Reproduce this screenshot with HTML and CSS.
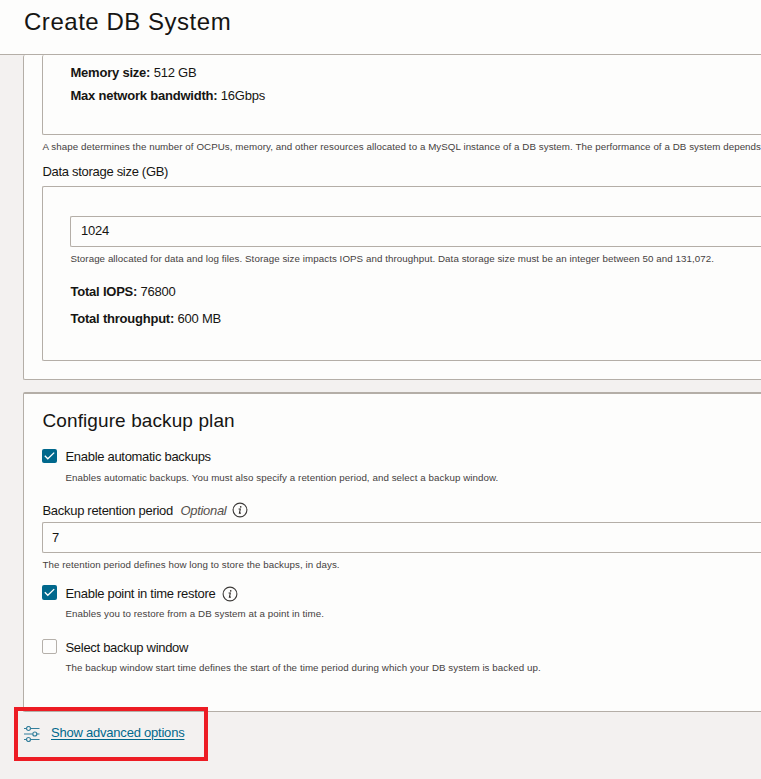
FILE: index.html
```html
<!DOCTYPE html>
<html lang="en">
<head>
<meta charset="utf-8">
<title>Create DB System</title>
<link rel="stylesheet" href="styles.css">
</head>
<body>
<header class="page-header"><h1>Create DB System</h1></header>
<main class="content">
  <section class="card card-hardware">
    <div class="box shape-box">
      <p class="detail"><b>Memory size:</b> 512 GB</p>
      <p class="detail"><b>Max network bandwidth:</b> 16Gbps</p>
    </div>
    <p class="hint shape-hint">A shape determines the number of OCPUs, memory, and other resources allocated to a MySQL instance of a DB system. The performance of a DB system depends</p>
    <p class="label storage-label">Data storage size (GB)</p>
    <div class="box storage-box">
      <div class="field">1024</div>
      <p class="hint storage-hint">Storage allocated for data and log files. Storage size impacts IOPS and throughput. Data storage size must be an integer between 50 and 131,072.</p>
      <p class="detail total"><b>Total IOPS:</b> 76800</p>
      <p class="detail total"><b>Total throughput:</b> 600 MB</p>
    </div>
  </section>
  <section class="card card-backup">
    <h2>Configure backup plan</h2>
    <div class="option option-auto">
      <svg class="check" viewBox="0 0 15 15"><rect width="15" height="14" rx="2" fill="#00688c"/><path d="M2.800 6.800 5.800 9.800 12.200 3.600" fill="none" stroke="#fff" stroke-width="1.300"/></svg>
      <div>
        <p class="label auto-label">Enable automatic backups</p>
        <p class="hint auto-hint">Enables automatic backups. You must also specify a retention period, and select a backup window.</p>
      </div>
    </div>
    <div class="retention-label">
      <span class="label retention-text">Backup retention period</span>
      <span class="optional">Optional</span>
      <svg class="info" viewBox="0 0 16 16"><circle cx="8" cy="8" r="6.9" fill="none" stroke="#3c3a38" stroke-width="1.1"/><circle cx="8.7" cy="4.9" r=".8" fill="#312d2a"/><path d="M6.6 7h1.7L7.4 11.1h1.500" fill="none" stroke="#312d2a" stroke-width="1.1"/></svg>
    </div>
    <div class="field retention-field">7</div>
    <p class="hint retention-hint">The retention period defines how long to store the backups, in days.</p>
    <div class="option option-restore">
      <svg class="check" viewBox="0 0 15 15"><rect width="15" height="15" rx="2" fill="#00688c"/><path d="M2.800 7.300 5.800 10.300 12.200 4.100" fill="none" stroke="#fff" stroke-width="1.300"/></svg>
      <div>
        <div class="restore-head">
          <span class="label restore-label">Enable point in time restore</span>
          <svg class="info" viewBox="0 0 16 16"><circle cx="8" cy="8" r="6.9" fill="none" stroke="#3c3a38" stroke-width="1.1"/><circle cx="8.7" cy="4.9" r=".8" fill="#312d2a"/><path d="M6.6 7h1.7L7.4 11.1h1.500" fill="none" stroke="#312d2a" stroke-width="1.1"/></svg>
        </div>
        <p class="hint restore-hint">Enables you to restore from a DB system at a point in time.</p>
      </div>
    </div>
    <div class="option option-window">
      <svg class="check" viewBox="0 0 15 15"><rect x=".5" y=".5" width="14" height="14" rx="1.5" fill="#fdfdfc" stroke="#b5b0aa"/></svg>
      <div>
        <p class="label window-label">Select backup window</p>
        <p class="hint window-hint">The backup window start time defines the start of the time period during which your DB system is backed up.</p>
      </div>
    </div>
  </section>
  <div class="advanced">
    <svg class="sliders" viewBox="0 0 16 16" fill="none" stroke="#337f9c" stroke-width="1.2"><path d="M0 2.500h2.500M6.500 2.500H15.500M0 8h8.500M13 8h2.500M0 13.500h2.500M6.500 13.500H15.500"/><circle cx="4.500" cy="2.500" r="2"/><circle cx="10.800" cy="8" r="2"/><circle cx="4.500" cy="13.500" r="2"/></svg>
    <a href="#">Show advanced options</a>
  </div>
</main>
<div class="highlight"></div>
</body>
</html>
```
FILE: styles.css
```css
* { box-sizing: border-box; }
html { overflow: hidden; }
body {
  margin: 0;
  width: 761px;
  height: 779px;
  overflow: hidden;
  position: relative;
  background: #f3f1f0;
  color: #161513;
  font: 13px/20px "Liberation Sans", Arial, sans-serif;
  letter-spacing: -.22px;
  white-space: nowrap;
}
p, h1, h2 { margin: 0; font-weight: normal; }
.page-header {
  height: 55px;
  padding: 7px 0 0 24px;
  background: #fdfdfc;
  border-bottom: 1px solid #b4aea7;
}
h1 { font-size: 24px; line-height: 30px; letter-spacing: .53px; }
.content { padding-left: 23px; }
.card {
  background: #fdfdfc;
  border: 1px solid #b4aea7;
  border-right: 0;
  border-radius: 2px 0 0 2px;
  padding-left: 18px;
}
.card-hardware { height: 325px; border-top: 0; }
.box {
  border: 1px solid #b4aea7;
  border-right: 0;
  border-radius: 2px 0 0 2px;
  padding-left: 27px;
}
.shape-box { height: 80px; border-top: 0; padding-top: 6px; }
.detail { height: 23px; line-height: 23px; text-indent: .5px; }
.label, .optional { letter-spacing: -.3px; text-indent: .5px; }
.hint { font-size: 9.75px; line-height: 14px; letter-spacing: .065px; color: #45413e; text-indent: .5px; }
.shape-hint { margin-top: 5px; }
.storage-label { margin-top: 8px; }
.storage-box { height: 175px; margin-top: 4px; padding-top: 29px; }
.field {
  height: 31px;
  padding-left: 10px;
  line-height: 28px;
  border: 1px solid #b4aea7;
  border-right: 0;
  border-radius: 2px 0 0 2px;
}
.storage-hint { margin: 5px 0 12px; }
.total { height: 27px; line-height: 27px; }
.card-backup { margin-top: 12px; height: 320px; border-top-width: 2px; }
h2 { padding-top: 14px; font-size: 19px; line-height: 26px; letter-spacing: .1px; text-indent: .5px; }
.option { display: flex; gap: 8px; }
.check { width: 15px; height: 15px; flex: none; }
.option-auto { margin-top: 15px; height: 46px; }
.auto-label { margin-top: -2px; }
.window-label { margin-top: -1px; }
.auto-hint { margin-top: 4px; }
.retention-label { display: flex; height: 20px; margin-top: 5px; line-height: 22px; }
.optional { margin: 0 6px 0 7px; font-style: italic; color: #55514d; }
.info { width: 16px; height: 16px; margin-top: 2px; }
.retention-field { margin-top: 2px; padding-left: 9px; line-height: 30px; }
.retention-hint { margin-top: 5px; }
.option-restore { margin-top: 13px; height: 54px; }
.restore-head { display: flex; gap: 7px; margin-top: -1px; }
.restore-hint { margin-top: 3px; }
.option-window { height: 40px; }
.window-hint { margin-top: 3px; }
.advanced { display: flex; align-items: center; gap: 12px; margin-top: 11px; height: 20px; }
.sliders { width: 16px; height: 16px; margin: 1px -.5px 0 .5px; }
.advanced a { color: #00688c; text-underline-offset: 2px; }
.highlight {
  position: absolute;
  left: 14px;
  top: 707px;
  width: 194px;
  height: 54px;
  border: 4px solid #ed1c24;
}
```
